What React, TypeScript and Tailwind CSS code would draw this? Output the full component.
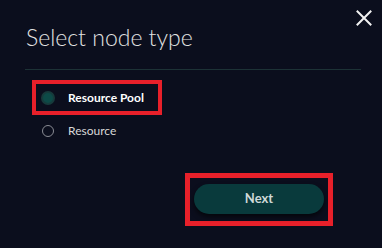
import React from "react";

export default function App() {
  return (
    <div
      className="relative w-[382px] h-[248px] bg-[#0b0e1d] overflow-hidden"
      style={{ fontFamily: "Lato, 'Open Sans', sans-serif" }}
    >
      <button className="absolute left-[356px] top-[10px] w-[16px] h-[16px] p-0" aria-label="Close">
        <svg width="16" height="16" viewBox="0 0 16 16">
          <path d="M1.5 1.5 L14.5 14.5 M14.5 1.5 L1.5 14.5" stroke="#f2f2f2" strokeWidth="2" strokeLinecap="square" />
        </svg>
      </button>

      <div className="pt-[21px] pl-[25px] pr-[21px]">
        <h1 className="pl-[1px] text-[23px] leading-[32px] font-light text-[#e2e2e2]">Select node type</h1>
        <div className="mt-[16px] h-px bg-[#1d3236]" />
      </div>

      <div className="flex flex-col items-start pl-[32px]">
        <div className="mt-[10px] flex items-center h-[35px] w-[130px] border-4 border-[#e8202a] pl-[5px]">
          <span className="w-[14px] h-[14px] rounded-full border-2 border-[#173a3b] bg-[#0d4a47]" />
          <span className="ml-[13px] text-[12px] font-bold text-white">Resource Pool</span>
        </div>
        <div className="mt-[6px] flex items-center h-[20px] pl-[10px]">
          <span className="w-[12px] h-[12px] rounded-full border border-[#8a8c94]" />
          <span className="ml-[14px] text-[12px] text-[#d8d8d8]">Resource</span>
        </div>
      </div>

      <div className="mt-[32px] flex justify-end pr-[49px]">
        <div className="border-[5px] border-[#e8202a] pt-[6px] pb-[7px] px-[4px]">
          <button className="w-[130px] h-[30px] rounded-full bg-[#093a3c] shadow-[0_3px_5px_rgba(0,0,0,0.6)] text-[13px] font-bold text-[#cfd8d8]">
            Next
          </button>
        </div>
      </div>
    </div>
  );
}
